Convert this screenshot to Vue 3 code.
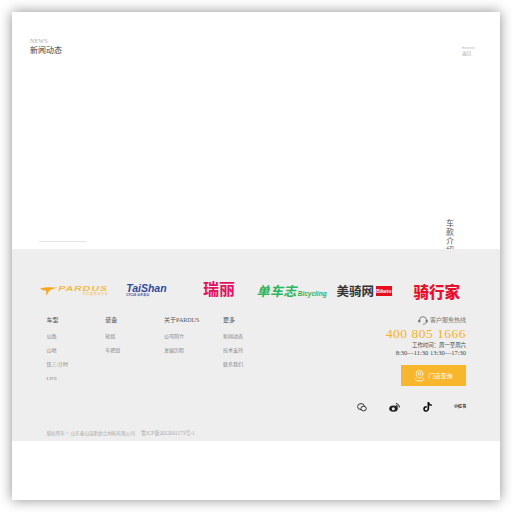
<script setup>
const logos = [
  { name: 'pardus' },
  { name: 'taishan' },
  { name: 'ruili' },
  { name: 'danche' },
  { name: 'meiqi' },
  { name: 'qixing' }
]

const navs = [
  { title: '车型', items: ['公路', '山地', '铁三/计时', 'LIFE'] },
  { title: '装备', items: ['轮组', '车把组'] },
  { title: '关于PARDUS', items: ['公司简介', '发展历程'] },
  { title: '更多', items: ['新闻动态', '技术支持', '联系我们'] }
]
</script>

<template>
  <div class="page">
    <div class="card">
      <section class="news">
        <div class="news-left">
          <div>
            <p class="en">NEWS</p>
            <h2 class="title">新闻动态</h2>
          </div>
          <div class="rule"></div>
        </div>
        <div class="news-right">
          <a class="back">
            <svg class="arrow" width="13" height="3" viewBox="0 0 13 3" fill="none" stroke="#bbb" stroke-width=".8">
              <path d="M0 2 H13 M0 2 L1.500 .6"/>
            </svg>
            <span>返回</span>
          </a>
          <div class="vert">车<br>款<br>介<br>绍</div>
        </div>
      </section>

      <footer class="foot">
        <div class="logos">
          <div v-for="l in logos" :key="l.name" class="logo">
            <template v-if="l.name === 'pardus'">
              <svg class="bird" width="18" height="9" viewBox="0 0 18 9">
                <path d="M0 1.5 C5 0 12 0 18 .8 C14 1.6 11 2.4 9.500 3.500 C8.500 5 7.500 7 6 8.600 C6 6.500 6.200 5 6.500 3.800 C4.500 3.700 2 3 0 1.500Z" fill="#f5a623"/>
              </svg>
              <div class="pardus">
                <span class="pardus-t">PARDUS</span>
                <span class="pardus-s">帕 拉 度 斯 自 行 车</span>
              </div>
            </template>
            <div v-else-if="l.name === 'taishan'" class="taishan">
              <span class="taishan-t">TaiShan</span>
              <span class="taishan-s">CYCLE 山东泰山</span>
            </div>
            <span v-else-if="l.name === 'ruili'" class="ruili">瑞丽</span>
            <div v-else-if="l.name === 'danche'" class="danche">
              <span class="danche-t">单车志</span><span class="danche-e">Bicycling</span>
            </div>
            <div v-else-if="l.name === 'meiqi'" class="meiqi">
              <span class="meiqi-t">美骑网</span><span class="meiqi-e">Biketo</span>
            </div>
            <span v-else class="qixing">骑行家</span>
          </div>
        </div>

        <div class="info">
          <nav class="navs">
            <div v-for="n in navs" :key="n.title" class="nav-col">
              <h4>{{ n.title }}</h4>
              <a v-for="i in n.items" :key="i">{{ i }}</a>
            </div>
          </nav>
          <div class="contact">
            <div class="hotline">
              <svg width="10" height="9" viewBox="0 0 10 9" fill="none" stroke="#666" stroke-width=".8">
                <path d="M1.500 5.500 V4 A3.500 3.300 0 0 1 8.500 4 V5.500"/>
                <path d="M.6 4.300 H2 V6 H.6Z M8 4.300 H9.400 V6 H8Z"/>
                <path d="M8.500 6 C8 7.600 6.500 8.200 5 8.200"/>
              </svg>
              <span>客户服务热线</span>
            </div>
            <div class="phone">400 805 1666</div>
            <p class="hours"><span class="hours-cn">工作时间：周一至周六</span><br>8:30—11:30 13:30—17:30</p>
            <a class="store">
              <svg width="11" height="12" viewBox="0 0 11 12" fill="none" stroke="#fff" stroke-width=".8">
                <path d="M5.500 8.600 C3.500 6.800 2 5.500 2 3.800 A3.500 3.300 0 0 1 9 3.800 C9 5.500 7.500 6.800 5.500 8.600Z"/>
                <circle cx="5.500" cy="3.800" r="1.300"/>
                <path d="M2.500 8 C.5 9 1 11 5.500 11 C10 11 10.500 9 8.500 8"/>
              </svg>
              <span>门店查询</span>
            </a>
            <div class="socials">
              <svg width="10" height="9" viewBox="0 0 10 9" fill="none" stroke="#222" stroke-width=".9">
                <ellipse cx="4" cy="3.600" rx="3.400" ry="3"/>
                <ellipse cx="6.600" cy="5.600" rx="2.700" ry="2.300" fill="#eee"/>
              </svg>
              <svg width="11" height="9" viewBox="0 0 11 9">
                <ellipse cx="4.500" cy="5.600" rx="4.300" ry="3.200" fill="#222"/>
                <circle cx="4.300" cy="5.700" r="1.500" fill="#eee"/>
                <path d="M6.800 .7 A3.300 3.300 0 0 1 10.300 4.500" fill="none" stroke="#222" stroke-width="1"/>
                <path d="M7 2.300 A1.700 1.700 0 0 1 8.800 4.200" fill="none" stroke="#222" stroke-width=".8"/>
              </svg>
              <svg width="9" height="10" viewBox="0 0 9 10">
                <path d="M4.500 0 H6.200 C6.300 1.500 7.300 2.400 8.800 2.500 V4.100 C7.700 4.100 6.900 3.800 6.200 3.300 V6.600 C6.200 8.500 4.800 9.800 3.100 9.800 C1.400 9.800 .2 8.500 .2 6.900 C.2 5.100 1.800 3.800 3.700 4.100 V5.800 C2.800 5.500 1.900 6 1.900 6.900 C1.900 7.600 2.400 8.200 3.100 8.200 C3.900 8.200 4.500 7.600 4.500 6.700Z" fill="#111"/>
              </svg>
              <span class="xhs">小红书</span>
            </div>
          </div>
        </div>

        <p class="copy"><span>版权所有 © 山东泰山瑞豹复合材料有限公司</span><span class="icp">鲁ICP备2022001173号-1</span></p>
      </footer>
    </div>
  </div>
</template>

<style>
body {
  background: #fff;
}
</style>

<style scoped>
.page {
  width: 512px;
  height: 512px;
  padding: 12px;
  box-sizing: border-box;
  overflow: hidden;
  font-family: "Liberation Serif", "Noto Sans CJK SC", serif;
}
.card {
  width: 488px;
  height: 488px;
  background: #fff;
  box-shadow: 0 0 12px rgba(0, 0, 0, 0.45);
}
p, h2, h4 {
  margin: 0;
  font-weight: normal;
}

.news {
  height: 237px;
  display: flex;
  justify-content: space-between;
  overflow: hidden;
  box-sizing: border-box;
  padding: 26px 25px 0 18px;
}
.news-left {
  display: flex;
  flex-direction: column;
  justify-content: space-between;
  height: 204px;
}
.en {
  font-size: 6px;
  line-height: 7px;
  color: #aaa;
  letter-spacing: .2px;
}
.title {
  font-size: 8px;
  line-height: 11px;
  color: #444;
  margin-top: 0;
}
.rule {
  width: 47px;
  height: 1px;
  background: #e2e2e2;
  margin-left: 9px;
}
.news-right {
  display: flex;
  flex-direction: column;
  align-items: flex-end;
  height: 220px;
}
.back {
  width: 13px;
  font-size: 4.500px;
  line-height: 6px;
  color: #aaa;
  margin-top: 8px;
  display: flex;
  flex-direction: column;
}
.arrow {
  display: block;
  margin-bottom: 2px;
}
.vert {
  font-size: 8px;
  line-height: 9.300px;
  width: 8px;
  color: #555;
  margin-right: 21px;
  margin-top: 161.500px;
  flex-shrink: 0;
}

.foot {
  height: 192px;
  background: #eee;
  box-sizing: border-box;
  padding-top: 33px;
}
.logos {
  display: grid;
  grid-template-columns: repeat(6, 72.600px);
  padding-left: 25.500px;
  height: 18px;
}
.logo {
  display: flex;
  align-items: center;
  justify-content: center;
  white-space: nowrap;
}

.bird {
  margin-right: 1px;
  flex-shrink: 0;
}
.pardus {
  width: 49px;
  display: flex;
  flex-direction: column;
  align-items: flex-end;
  font-family: "Liberation Sans", sans-serif;
  color: #f2bb4d;
}
.pardus-t {
  align-self: center;
  font-size: 7px;
  line-height: 6px;
  font-weight: bold;
  font-style: italic;
  letter-spacing: .5px;
  transform: scaleX(1.550);
}
.pardus-s {
  font-size: 3px;
  line-height: 4px;
  font-family: "Noto Sans CJK SC", sans-serif;
}

.taishan {
  display: flex;
  flex-direction: column;
  align-items: flex-start;
  color: #2d4b9a;
  font-family: "Liberation Sans", sans-serif;
  margin-top: -1px;
}
.taishan-t {
  font-size: 10.500px;
  line-height: 10px;
  font-weight: bold;
  font-style: italic;
}
.taishan-s {
  font-size: 3px;
  line-height: 5px;
  font-weight: bold;
  font-family: "Liberation Sans", "Noto Sans CJK SC", sans-serif;
}

.ruili {
  font-family: "Noto Sans CJK SC", sans-serif;
  font-size: 16px;
  font-weight: 700;
  line-height: 16px;
  color: #e0145e;
  margin-top: -6px;
}

.danche {
  font-family: "Noto Sans CJK SC", sans-serif;
  color: #2fb45f;
  display: flex;
  align-items: flex-end;
}
.danche-t {
  font-size: 13px;
  line-height: 14px;
  font-weight: 700;
  font-style: italic;
  letter-spacing: .4px;
}
.danche-e {
  font-family: "Liberation Sans", sans-serif;
  font-size: 6.500px;
  line-height: 9px;
  font-weight: bold;
  font-style: italic;
  margin-left: 1px;
}

.meiqi {
  display: flex;
  align-items: center;
  font-family: "Noto Sans CJK SC", sans-serif;
}
.meiqi-t {
  font-size: 12.500px;
  line-height: 14px;
  font-weight: 700;
  color: #333;
}
.meiqi-e {
  background: #e60f1e;
  color: #fff;
  font-family: "Liberation Sans", sans-serif;
  font-size: 5px;
  line-height: 10px;
  font-weight: bold;
  margin-left: 2px;
  width: 16px;
  overflow: hidden;
  text-align: center;
}

.qixing {
  font-family: "Noto Sans CJK SC", sans-serif;
  font-size: 15.500px;
  line-height: 16px;
  font-weight: 900;
  color: #e8112d;
  margin-top: -1px;
}

.info {
  display: flex;
  justify-content: space-between;
  padding: 16px 34px 0 34.500px;
}
.navs {
  display: flex;
}
.nav-col {
  width: 58.800px;
  display: flex;
  flex-direction: column;
  align-items: flex-start;
}
.nav-col h4 {
  font-size: 6px;
  line-height: 8px;
  color: #555;
  margin-bottom: 6px;
  white-space: nowrap;
}
.nav-col a {
  font-size: 5px;
  line-height: 14px;
  color: #888;
  white-space: nowrap;
}

.contact {
  display: flex;
  flex-direction: column;
  align-items: flex-end;
  width: 100px;
}
.hotline {
  display: flex;
  align-items: center;
  gap: 2px;
  font-size: 6px;
  line-height: 9px;
  color: #777;
}
.phone {
  font-size: 13.500px;
  line-height: 14px;
  color: #f5b22a;
  letter-spacing: .5px;
  margin-top: 2px;
  white-space: nowrap;
}
.hours {
  font-size: 6.500px;
  line-height: 7px;
  color: #444;
  text-align: right;
  white-space: nowrap;
}
.hours-cn {
  font-size: 5.400px;
}
.store {
  width: 65px;
  height: 21px;
  background: #f8b62c;
  color: #fff;
  font-size: 6px;
  display: flex;
  align-items: center;
  justify-content: center;
  gap: 3px;
  margin-top: 9px;
}
.socials {
  display: flex;
  align-items: center;
  justify-content: flex-end;
  gap: 22.500px;
  margin-top: 16px;
  height: 10px;
}
.xhs {
  font-size: 4px;
  line-height: 10px;
  font-weight: bold;
  color: #222;
  white-space: nowrap;
}

.copy {
  font-size: 4.600px;
  line-height: 8px;
  color: #aaa;
  padding-left: 34.500px;
  margin-top: 17px;
  white-space: nowrap;
}
.icp {
  font-size: 5.200px;
  margin-left: 6px;
}
</style>
